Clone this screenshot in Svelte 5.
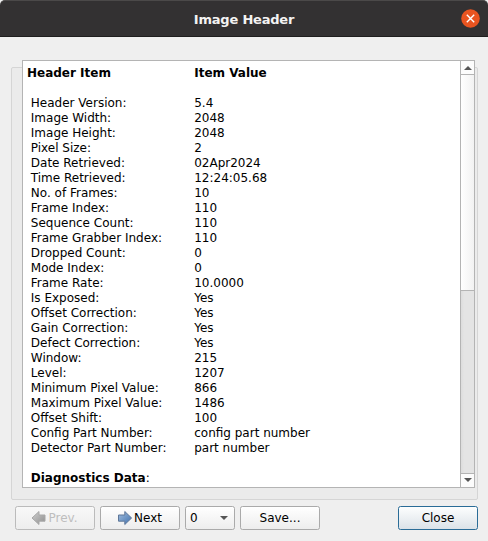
<script>
  const items = [
    ['Header Version:', '5.4'],
    ['Image Width:', '2048'],
    ['Image Height:', '2048'],
    ['Pixel Size:', '2'],
    ['Date Retrieved:', '02Apr2024'],
    ['Time Retrieved:', '12:24:05.68'],
    ['No. of Frames:', '10'],
    ['Frame Index:', '110'],
    ['Sequence Count:', '110'],
    ['Frame Grabber Index:', '110'],
    ['Dropped Count:', '0'],
    ['Mode Index:', '0'],
    ['Frame Rate:', '10.0000'],
    ['Is Exposed:', 'Yes'],
    ['Offset Correction:', 'Yes'],
    ['Gain Correction:', 'Yes'],
    ['Defect Correction:', 'Yes'],
    ['Window:', '215'],
    ['Level:', '1207'],
    ['Minimum Pixel Value:', '866'],
    ['Maximum Pixel Value:', '1486'],
    ['Offset Shift:', '100'],
    ['Config Part Number:', 'config part number'],
    ['Detector Part Number:', 'part number']
  ];
</script>

<div class="window">
  <header>
    <span class="title">Image Header</span>
    <button class="dismiss" aria-label="Close window">
      <svg width="19" height="19" viewBox="0 0 19 19">
        <circle cx="9.5" cy="9.5" r="9.3" fill="#e95420" />
        <path d="M5.8 5.8l7.4 7.4M13.2 5.8l-7.4 7.4" stroke="#fff" stroke-width="1.4" fill="none" />
      </svg>
    </button>
  </header>

  <main>
    <div class="group">
      <div class="viewer">
        <div class="text">
          <div class="row head"><span>Header Item</span><span>Item Value</span></div>
          {#each items as [name, value]}
            <div class="row"><span>{name}</span><span>{value}</span></div>
          {/each}
          <div class="section"><b>Diagnostics Data</b>:</div>
        </div>
        <div class="scrollbar">
          <div class="arrow">
            <svg width="8" height="4" viewBox="0 0 8 4"><path d="M4 0L8 4H0z" fill="#555" /></svg>
          </div>
          <div class="thumb"></div>
          <div class="track"></div>
          <div class="arrow down">
            <svg width="8" height="4" viewBox="0 0 8 4"><path d="M0 0H8L4 4z" fill="#555" /></svg>
          </div>
        </div>
      </div>
    </div>
  </main>

  <footer>
    <button class="btn icon" disabled>
      <svg width="16" height="16" viewBox="0 0 16 16">
        <defs>
          <linearGradient id="gray" x1="0" y1="0" x2="1" y2="1">
            <stop offset="0" stop-color="#d0d0d0" /><stop offset="1" stop-color="#8e8e8e" />
          </linearGradient>
        </defs>
        <path d="M1 8L8 1.5V5h6v6.2H8v3.3z" fill="url(#gray)" stroke="#a8a8a8" />
      </svg><span>Prev.</span>
    </button>
    <button class="btn icon">
      <svg width="16" height="16" viewBox="0 0 16 16">
        <defs>
          <linearGradient id="blue" x1="0" y1="0" x2="1" y2="1">
            <stop offset="0" stop-color="#a3bfdf" /><stop offset="1" stop-color="#3f70ad" />
          </linearGradient>
        </defs>
        <path d="M14.6 8L7.8 1.5V5h-6.3v6.2h6.3v3.3z" fill="url(#blue)" stroke="#5f7799" />
      </svg><span>Next</span>
    </button>
    <button class="btn combo">
      <span>0</span>
      <svg width="8" height="4" viewBox="0 0 8 4"><path d="M0 0H8L4 4z" fill="#555" /></svg>
    </button>
    <button class="btn">Save...</button>
    <button class="btn default">Close</button>
  </footer>
</div>

<style>
  :global(body) {
    margin: 0;
    background: #efefef;
  }
  .window {
    width: 488px;
    height: 541px;
    display: flex;
    flex-direction: column;
    background: #efefef;
    font: 12px/15px 'DejaVu Sans', sans-serif;
    color: #000;
    overflow: hidden;
  }
  header {
    box-sizing: border-box;
    flex: none;
    height: 37px;
    display: grid;
    grid-template-columns: 1fr auto 1fr;
    align-items: center;
    padding: 0 8px;
    background: #333132;
    border-top: 1px solid #4b4949;
    border-bottom: 1px solid #1f1e1e;
    border-radius: 5px 5px 0 0;
  }
  .title {
    grid-column: 2;
    padding-top: 2px;
    font-size: 13px;
    letter-spacing: -0.2px;
    font-weight: bold;
    color: #f3f3f3;
  }
  .dismiss {
    justify-self: end;
    display: flex;
    padding: 0;
    border: 0;
    background: none;
  }
  main {
    padding: 30px 10px 0 11px;
  }
  .group {
    box-sizing: border-box;
    height: 433px;
    padding: 0 2px 11px 10px;
    background: #ebebeb;
    border: 1px solid #d5d5d5;
    border-radius: 2px;
  }
  .viewer {
    box-sizing: border-box;
    height: 428px;
    margin-top: -8px;
    display: flex;
    background: #fff;
    border: 1px solid #b4b4b4;
  }
  .text {
    flex: 1;
    padding: 5px 0 0 4px;
    overflow: hidden;
    white-space: nowrap;
  }
  .row {
    display: grid;
    grid-template-columns: 163.4px 1fr;
    padding-left: 3.8px;
  }
  .head {
    grid-template-columns: 167.2px 1fr;
    padding-left: 0;
    margin-bottom: 15px;
    font-weight: bold;
  }
  .section {
    margin-top: 15px;
    padding-left: 3.8px;
  }
  .scrollbar {
    width: 13px;
    display: flex;
    flex-direction: column;
    border-left: 1px solid #b4b4b4;
  }
  .arrow {
    flex: none;
    height: 13px;
    display: flex;
    align-items: center;
    justify-content: center;
    border-bottom: 1px solid #b4b4b4;
    background: #fcfcfc;
  }
  .arrow.down {
    height: 12px;
    padding-bottom: 1px;
    border-bottom: 0;
    border-top: 1px solid #b4b4b4;
  }
  .thumb {
    height: 215px;
    background: linear-gradient(90deg, #fff, #f2f2f2);
    border-bottom: 1px solid #b4b4b4;
  }
  .track {
    flex: 1;
    background: linear-gradient(90deg, #dcdcdc, #e4e4e4 3px);
  }
  footer {
    display: flex;
    gap: 5px;
    padding: 6px 10px 0 15px;
  }
  .btn {
    box-sizing: border-box;
    width: 80px;
    height: 24px;
    display: flex;
    align-items: center;
    justify-content: center;
    padding: 1px 0 0;
    border: 1px solid #aaa;
    border-radius: 2.5px;
    background: linear-gradient(#fff, #ededed);
    font: inherit;
    color: #000;
  }
  .icon {
    gap: 1px;
    padding-right: 1px;
  }
  .icon svg {
    margin-top: -1px;
  }
  .btn:disabled {
    color: #bebebe;
    border-color: #bbb;
    background: linear-gradient(#f8f8f8, #ededed);
  }
  .combo {
    width: 50px;
    justify-content: space-between;
    padding: 1px 6px 0 4px;
  }
  .combo svg {
    margin-top: -1px;
  }
  .default {
    margin-left: auto;
    border-color: #2a6c97;
    background: linear-gradient(#fdfefe, #dbe2e8);
  }
</style>
